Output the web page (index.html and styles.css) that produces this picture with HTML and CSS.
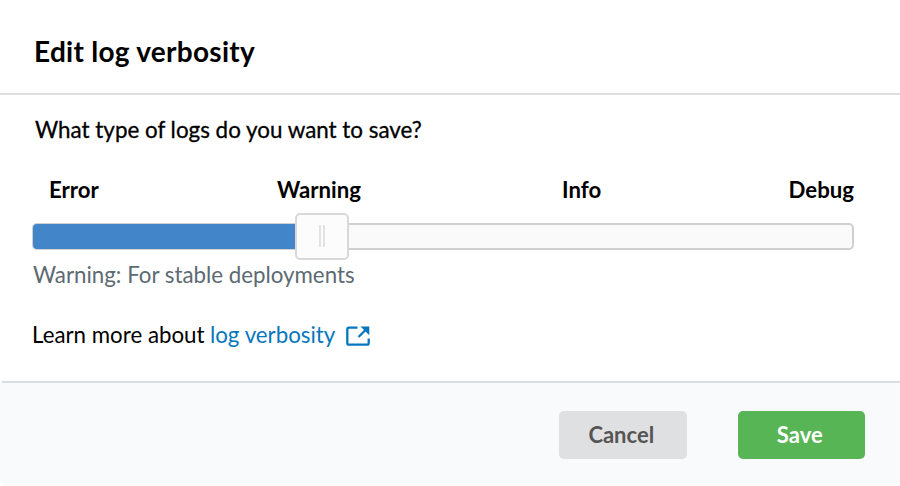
FILE: index.html
```html
<!DOCTYPE html>
<html lang="en">
<head>
<meta charset="utf-8">
<title>Edit log verbosity</title>
<link rel="stylesheet" href="styles.css">
</head>
<body>
<div class="dialog">
  <header class="header"><h1 class="title">Edit log verbosity</h1></header>
  <main class="content">
    <p class="question">What type of logs do you want to save?</p>
    <div class="labels"><span>Error</span><span>Warning</span><span>Info</span><span>Debug</span></div>
    <div class="slider"><div class="fill"></div><div class="handle"><i></i><i></i></div></div>
    <p class="hint">Warning: For stable deployments</p>
    <p class="more"><span class="lead">Learn more about</span> <a class="link">log verbosity</a>
      <svg class="icon" viewBox="0 0 24 22" width="24" height="22"><path class="frame" d="M11.500 2.700H3Q1.300 2.700 1.300 4.400V18Q1.300 19.700 3 19.700H21Q22.700 19.700 22.700 18V13.500"/><path class="frame" d="M12.500 12L20 4.500"/><path class="head" d="M14.500 1.500H23.300V10.300Z"/></svg></p>
  </main>
  <footer class="footer"><button class="btn cancel"><span>Cancel</span></button><button class="btn save"><span>Save</span></button></footer>
</div>
</body>
</html>
```
FILE: styles.css
```css
* { box-sizing: border-box; }
body { margin: 0; background: #fff; color: #000; font: 22px/28px Lato, sans-serif; }
.dialog { width: 900px; height: 486px; display: flex; flex-direction: column; overflow: hidden; border-radius: 0 0 8px 8px; }
.header { height: 95px; padding: 35px 34px 0; border-bottom: 2px solid #dedede; }
.title { margin: 0; font-size: 28px; line-height: 32px; font-weight: 700; letter-spacing: .28px; }
.content { height: 286px; padding: 21px 46px 0 33px; }
p { margin: 0; white-space: nowrap; }
.question { padding-left: 2px; font-size: 22.400px; -webkit-text-stroke: .3px #000; }
.labels { display: grid; grid-template-columns: 228px 285px 1fr auto; margin: 32px 0 0 16px; font-size: 22.200px; font-weight: 700; }
.slider { position: relative; height: 27px; margin: 19px 0 0 -1px; border: 2px solid #d0d0d0; border-radius: 5px; background: #fafafa; }
.fill { width: 264px; height: 25px; margin: -1px; border-radius: 4px 0 0 4px; background: #4285c9; }
.handle { position: absolute; left: 261px; top: -12px; width: 54px; height: 47px; border: 2px solid #d9d9d9; border-radius: 5px; background: #fcfcfc; display: flex; align-items: center; justify-content: center; gap: 3px; }
.handle i { width: 2px; height: 22px; margin: -2px 0 0 -1px; background: #e2e2e2; }
.hint { margin-top: 11px; font-size: 22.300px; color: #5c6a73; }
.more { display: flex; align-items: center; margin: 32px 0 0 -1px; font-size: 22.300px; }
.link { color: #0577bf; margin-left: 5.500px; }
.icon { margin: 2px 0 0 11px; }
.frame { fill: none; stroke: #0577bf; stroke-width: 2.300; }
.head { fill: #0577bf; }
.footer { height: 105px; background: linear-gradient(#dbdddf, #dbdddf) 2px 0 / 100% 2px no-repeat, #f8fafc; display: flex; justify-content: flex-end; gap: 51px; padding: 30px 35px 0 0; }
.btn { width: 127.500px; height: 48px; border: 0; border-radius: 5px; padding: 0 3px 0 0; font: 700 22px/28px Lato, sans-serif; }
.cancel { background: #dfe0e1; color: #555; }
.save { background: #58b555; color: #fff; }
```
